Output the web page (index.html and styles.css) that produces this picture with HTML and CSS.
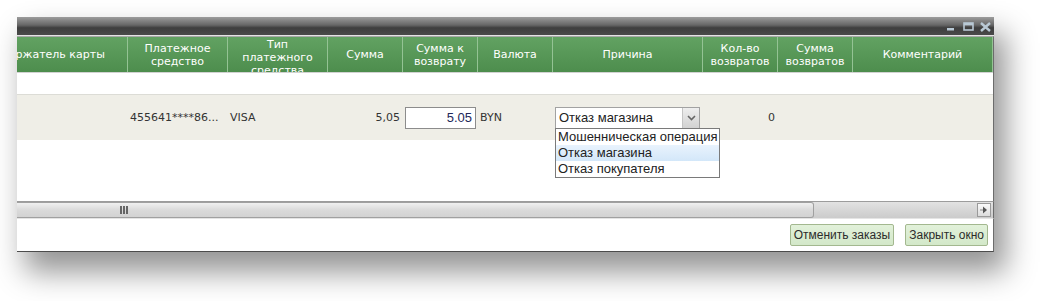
FILE: index.html
```html
<!DOCTYPE html>
<html lang="ru">
<head>
    <meta charset="UTF-8">
    <meta name="viewport" content="width=device-width, initial-scale=1.0">
    <title>Отмена заказов</title>
    <link rel="stylesheet" href="styles.css">
</head>
<body>
    <div class="window">
        <div class="titlebar">
            <div class="controls">
                <svg width="44" height="10" viewBox="0 0 44 10">
                    <rect x="0" y="6" width="7" height="2.5" fill="#b9c9d5"/>
                    <rect x="17" y="1" width="9" height="7" fill="none" stroke="#b9c9d5" stroke-width="1.6"/>
                    <rect x="17" y="1" width="9" height="2.4" fill="#b9c9d5"/>
                    <path d="M34 1 L43 9 M43 1 L34 9" stroke="#b9c9d5" stroke-width="2.4"/>
                </svg>
            </div>
        </div>

        <div class="viewport">
            <div class="sheet">
                <div class="row head">
                    <div class="cell">Держатель карты</div>
                    <div class="cell">Платежное средство</div>
                    <div class="cell cell-top">Тип платежного средства</div>
                    <div class="cell">Сумма</div>
                    <div class="cell">Сумма к возврату</div>
                    <div class="cell">Валюта</div>
                    <div class="cell">Причина</div>
                    <div class="cell">Кол-во возвратов</div>
                    <div class="cell">Сумма возвратов</div>
                    <div class="cell">Комментарий</div>
                </div>

                <div class="row filter">
                    <div></div><div></div><div></div><div></div><div></div>
                    <div></div><div></div><div></div><div></div><div></div>
                </div>

                <div class="row data">
                    <div class="cell"></div>
                    <div class="cell">455641****86...</div>
                    <div class="cell">VISA</div>
                    <div class="cell num">5,05</div>
                    <div class="cell"><input class="amount" type="text" value="5.05"></div>
                    <div class="cell">BYN</div>
                    <div class="cell">
                        <div class="combo">
                            <span class="combo-text">Отказ магазина</span>
                            <span class="combo-arrow">
                                <svg width="9" height="6" viewBox="0 0 9 6">
                                    <path d="M1 1 L4.5 4.5 L8 1" fill="none" stroke="#666" stroke-width="1.6"/>
                                </svg>
                            </span>
                            <ul class="combo-list">
                                <li>Мошенническая операция</li>
                                <li class="selected">Отказ магазина</li>
                                <li>Отказ покупателя</li>
                            </ul>
                        </div>
                    </div>
                    <div class="cell num">0</div>
                    <div class="cell"></div>
                    <div class="cell"></div>
                </div>
            </div>
        </div>

        <div class="hscroll">
            <div class="thumb"><span class="grip"></span></div>
            <div class="track"></div>
            <div class="arrow">
                <svg width="12" height="12" viewBox="0 0 12 12">
                    <path d="M2 6 H5" stroke="#888" stroke-width="1"/>
                    <path d="M5 2.5 L9 6 L5 9.5 Z" fill="#555"/>
                </svg>
            </div>
        </div>

        <div class="footer">
            <button class="btn">Отменить заказы</button>
            <button class="btn">Закрыть окно</button>
        </div>
    </div>
</body>
</html>
```

FILE: styles.css
```css
html {
    background-color: #fff;
}

body {
    margin: 0;
    min-height: 301px;
    font-family: "DejaVu Sans", Verdana, sans-serif;
    font-size: 11px;
    color: #333;
}

.window {
    width: 977px;
    margin: 17px 0 0 17px;
    background-color: #fff;
    box-shadow: 10px 18px 28px 2px rgba(0, 0, 0, 0.42);
}

.titlebar {
    height: 18px;
    display: flex;
    justify-content: flex-end;
    align-items: center;
    padding-right: 3px;
    background: linear-gradient(#9c9c9c, #666 45%, #3e3e3e 60%, #4a4a4a);
    border-bottom: 1px solid #e4e4e4;
}

.controls svg {
    display: block;
    margin-top: 2px;
}

.viewport {
    height: 164px;
    overflow: hidden;
    border-top: 1px solid #a8a8a8;
    border-right: 1px solid #6c6c6c;
}

.sheet {
    margin-left: -39px;
    width: max-content;
}

.row {
    display: grid;
    grid-template-columns: 150px 100px 100px 75px 75px 75px 150px 75px 75px 140px;
}

.head {
    height: 35px;
    background: linear-gradient(#62a262, #4d8d4d);
    border-bottom: 1px solid #d2d2d2;
    color: #fff;
    line-height: 13px;
}

.head .cell {
    display: flex;
    align-items: center;
    justify-content: center;
    text-align: center;
    overflow: hidden;
    border-right: 1px solid #94c394;
    padding: 0 4px;
}

.head .cell-top {
    align-items: flex-start;
    padding-top: 1px;
}

.filter {
    height: 21px;
    border-bottom: 1px solid #dcdcd6;
}

.data {
    height: 45px;
    background-color: #efeee7;
}

.data .cell {
    display: flex;
    align-items: center;
    padding: 0 2px;
    white-space: nowrap;
}

.data .num {
    justify-content: flex-end;
    padding-right: 3px;
}

.amount {
    width: 71px;
    height: 22px;
    box-sizing: border-box;
    border: 1px solid #8c8c8c;
    padding: 0 3px;
    text-align: right;
    font-family: "Liberation Sans", Arial, sans-serif;
    font-size: 13px;
    color: #22285a;
    background-color: #fff;
}

.combo {
    position: relative;
    width: 145px;
    height: 22px;
    box-sizing: border-box;
    display: flex;
    border: 1px solid #a2a2a2;
    background-color: #fff;
    font-family: "Liberation Sans", Arial, sans-serif;
    font-size: 13px;
    color: #222;
}

.combo-text {
    flex-grow: 1;
    padding-left: 3px;
    line-height: 19px;
}

.combo-arrow {
    width: 16px;
    display: flex;
    align-items: center;
    justify-content: center;
    background: linear-gradient(#eee, #d2d2d2);
    border-left: 1px solid #c4c4c4;
}

.combo-list {
    position: absolute;
    top: 20px;
    left: -1px;
    width: 165px;
    margin: 0;
    padding: 0;
    list-style: none;
    box-sizing: border-box;
    border: 1px solid #7a7a7a;
    background-color: #fff;
}

.combo-list li {
    height: 16px;
    line-height: 16px;
    padding-left: 2px;
    white-space: nowrap;
}

.combo-list li.selected {
    background: linear-gradient(#e9f3fd, #d3e7f9);
}

.hscroll {
    height: 16px;
    display: flex;
    align-items: center;
    border-top: 1px solid #9c9c9c;
    background: linear-gradient(#e2e2e2, #cbcbcb);
    border-right: 1px solid #6c6c6c;
}

.thumb {
    width: 796px;
    height: 14px;
    display: flex;
    align-items: center;
    background: linear-gradient(#f0f0f0, #dadada 50%, #d2d2d2);
    border: 1px solid #a0a0a0;
    border-left: none;
    border-radius: 0 3px 3px 0;
}

.grip {
    width: 9px;
    height: 8px;
    margin-left: 103px;
    background: repeating-linear-gradient(90deg, #666 0, #666 2px, transparent 2px, transparent 3px);
}

.track {
    flex-grow: 1;
}

.arrow {
    width: 14px;
    height: 14px;
    box-sizing: border-box;
    margin-right: 2px;
    display: flex;
    align-items: center;
    justify-content: center;
    border: 1px solid #9a9a9a;
    background: linear-gradient(#fafafa, #dcdcdc);
}

.footer {
    height: 32px;
    display: flex;
    justify-content: flex-end;
    align-items: center;
    gap: 11px;
    padding-right: 5px;
    border-top: 1px solid #e4e4e4;
    border-bottom: 1px solid #4c4c4c;
    border-right: 1px solid #6c6c6c;
}

.btn {
    height: 22px;
    padding: 0 3px;
    border: 1px solid #a3b88f;
    border-radius: 2px;
    background: linear-gradient(#e2f1da, #d3e8c9);
    font-family: "Liberation Sans", Tahoma, sans-serif;
    font-size: 12px;
    color: #2c2c2c;
}
```
